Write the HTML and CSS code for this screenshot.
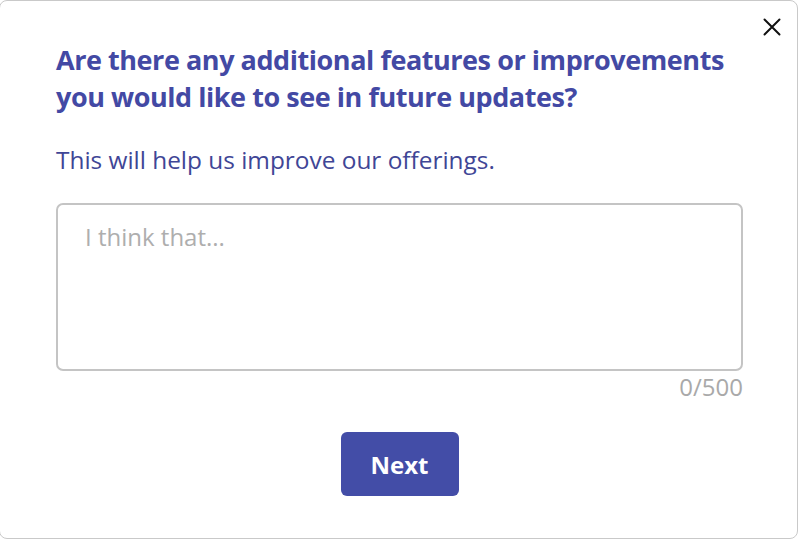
FILE: index.html
```html
<!DOCTYPE html>
<html>
<head>
<meta charset="utf-8">
<link rel="stylesheet" href="styles.css">
</head>
<body>
<div class="dialog">
  <button class="close" aria-label="Close">
    <svg width="18" height="18" viewBox="0 0 18 18"><path d="M1.5 1.5L16.5 16.5M16.5 1.5L1.5 16.5" stroke="#111" stroke-width="2" stroke-linecap="round"/></svg>
  </button>
  <h1 class="title">Are there any additional features or improvements you would like to see in future updates?</h1>
  <p class="subtitle">This will help us improve our offerings.</p>
  <textarea class="field" placeholder="I think that..."></textarea>
  <div class="counter">0/500</div>
  <div class="actions"><button class="next">Next</button></div>
</div>
</body>
</html>
```
FILE: styles.css
```css
html, body { margin: 0; padding: 0; background: #fff; }
body { font-family: "Open Sans", sans-serif; }
.dialog {
  position: relative;
  box-sizing: border-box;
  width: 799px;
  height: 539px;
  margin-left: -1px;
  border: 1px solid #c9c9c9;
  border-radius: 8px;
  padding: 40px 56px 0 56px;
  background: #fff;
}
.close {
  position: absolute;
  top: 17px;
  right: 16px;
  background: none;
  border: 0;
  padding: 0;
  width: 18px;
  height: 18px;
  cursor: pointer;
}
.close svg { display: block; }
.title {
  margin: 0;
  width: 686px;
  font-size: 27px;
  line-height: 37px;
  font-weight: 700;
  color: #4349a4;
  letter-spacing: -0.45px;
}
.subtitle {
  margin: 29px 0 0;
  font-size: 24.4px;
  line-height: 32px;
  color: #3f4696;
}
.field {
  display: block;
  box-sizing: border-box;
  width: 687px;
  height: 168px;
  margin-top: 27px;
  border: 2px solid #c4c4c4;
  border-radius: 7px;
  padding: 15px 27px;
  font-family: "Open Sans", sans-serif;
  font-size: 24px;
  resize: none;
  outline: none;
}
.field::placeholder { color: #aeaeae; }
.counter {
  width: 687px;
  text-align: right;
  font-size: 24px;
  line-height: 32px;
  color: #a9a9a9;
  margin-top: 0;
}
.actions {
  width: 687px;
  display: flex;
  justify-content: center;
  margin-top: 29px;
}
.next {
  width: 118px;
  height: 64px;
  border: 0;
  border-radius: 6px;
  background: #434da7;
  color: #fff;
  font-family: "Open Sans", sans-serif;
  font-weight: 700;
  font-size: 24px;
}
```
